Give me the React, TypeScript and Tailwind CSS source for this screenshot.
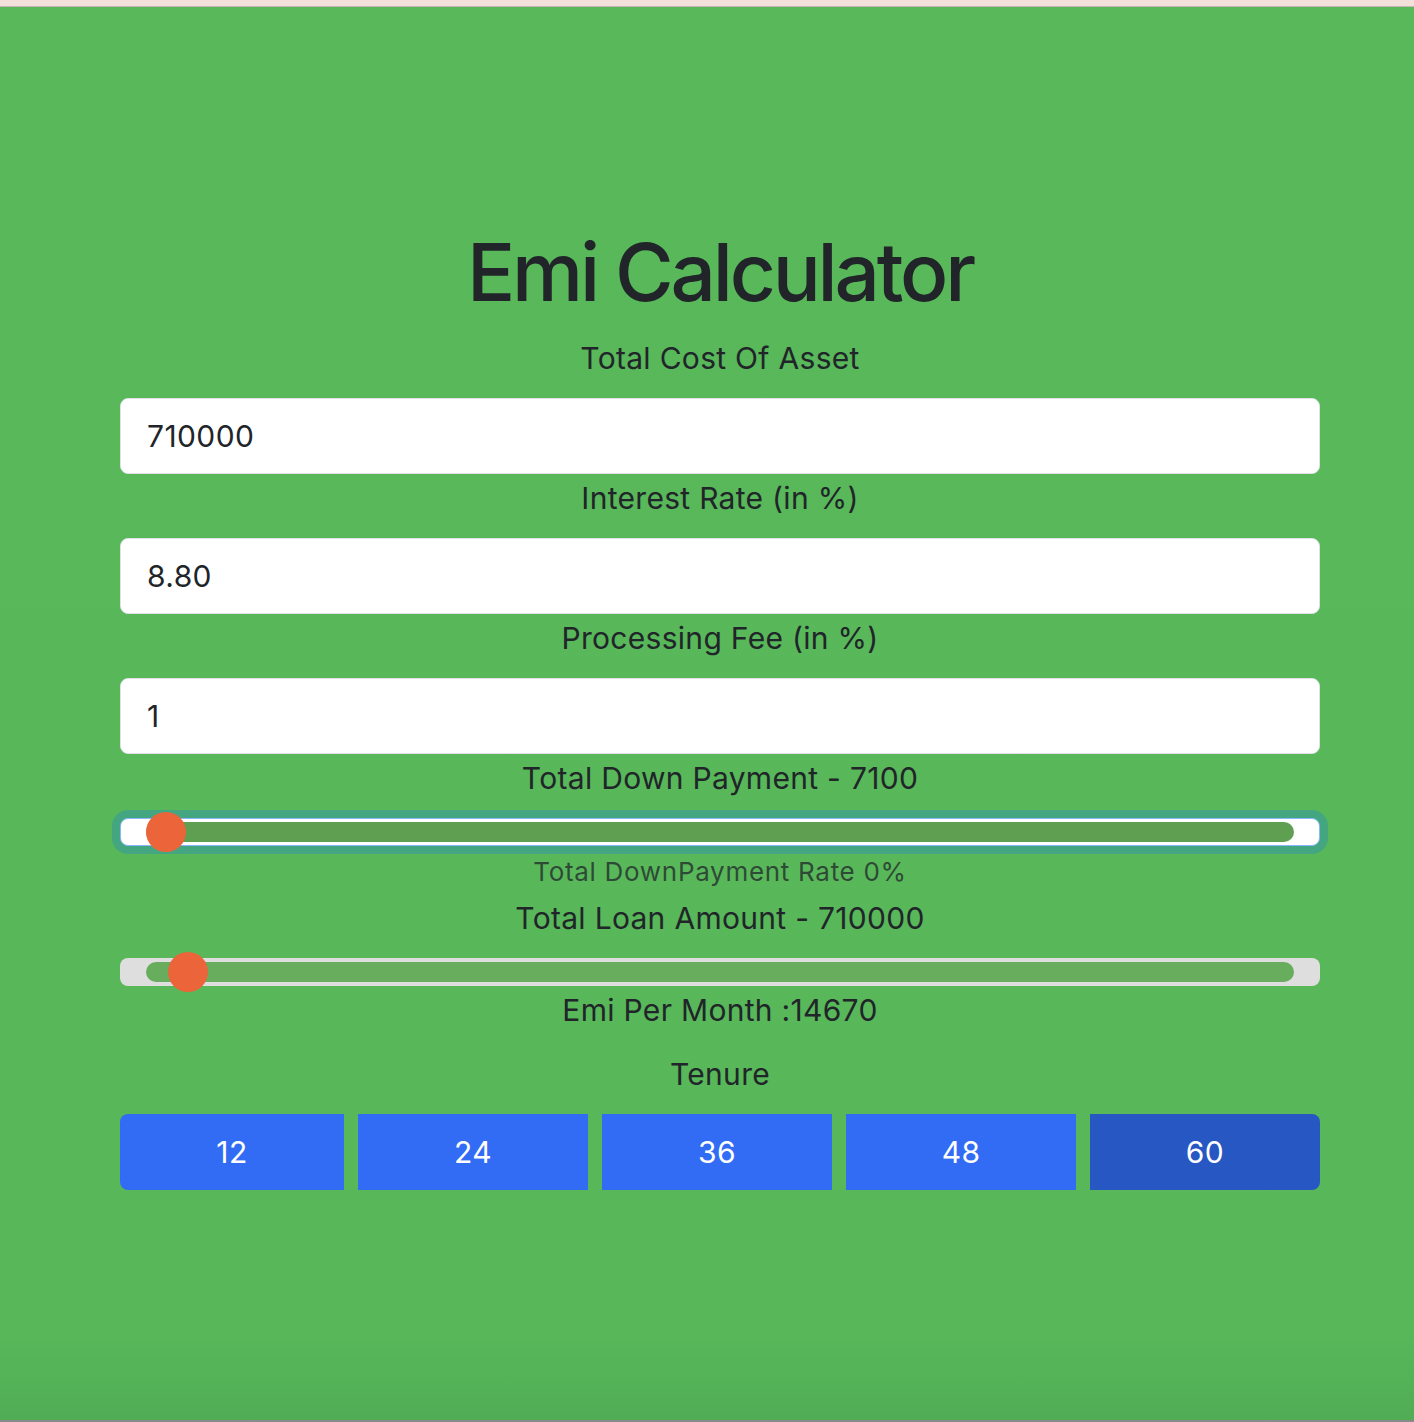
import React from "react";

const font = { fontFamily: "Inter, 'Noto Sans', 'Liberation Sans', sans-serif" };

function Label({ children, className = "" }: { children: React.ReactNode; className?: string }) {
  return (
    <div className={"h-[45px] leading-[45px] text-center text-[30px] tracking-[0.3px] text-[#212529] " + className}>
      {children}
    </div>
  );
}

function Input({ value }: { value: string }) {
  return (
    <div className="h-[76px] w-full rounded-lg border border-[#dee2e6] bg-white pl-[26px] flex items-center text-[30px] tracking-[0.4px] text-[#212529]">
      {value}
    </div>
  );
}

export default function App() {
  const tenures = ["12", "24", "36", "48", "60"];
  return (
    <div style={font} className="w-[1414px] h-[1422px] overflow-hidden flex flex-col">
      <div className="h-[6px] bg-[#f3e0da]" />
      <div className="h-[1px] bg-[#c4b6b2]" />
      <div className="flex-1 bg-gradient-to-b from-[#58b85a] via-[#57b759] via-[94%] to-[#51ad55] flex flex-col">
        <div className="w-[1200px] ml-[120px] flex flex-col pt-[217px]">
          <h1 className="h-[96px] leading-[96px] text-center text-[80px] font-medium text-[#212529] tracking-[-3.2px]">
            Emi Calculator
          </h1>
          <Label className="mt-[16px] mb-[17px]">Total Cost Of Asset</Label>
          <Input value="710000" />
          <Label className="mt-[2px] mb-[17px]">Interest Rate (in %)</Label>
          <Input value="8.80" />
          <Label className="mt-[2px] mb-[17px]">Processing Fee (in %)</Label>
          <Input value="1" />
          <Label className="mt-[2px] mb-[17px]">Total Down Payment - 7100</Label>

          {/* focused slider */}
          <div className="relative h-[28px] rounded-lg bg-white border border-[#86b7fe] shadow-[0_0_0_8px_rgba(13,110,253,0.25)] flex items-center px-[25px]">
            <div className="h-[20px] flex-1 rounded-[10px] bg-[#5e9f52]" />
            <div className="absolute left-[25px] top-1/2 -translate-y-1/2 w-[40px] h-[40px] rounded-full bg-[#ec6439]" />
          </div>

          <div className="mt-[6px] h-[39px] leading-[39px] text-center text-[26px] tracking-[0.7px] text-[#212529]/75">
            Total DownPayment Rate 0%
          </div>
          <Label className="mt-[5px] mb-[17px]">Total Loan Amount - 710000</Label>

          <div className="relative h-[28px] rounded-lg bg-[#dedede] flex items-center px-[26px]">
            <div className="h-[20px] flex-1 rounded-[10px] bg-[#68ad5e]" />
            <div className="absolute left-[48px] top-1/2 -translate-y-1/2 w-[40px] h-[40px] rounded-full bg-[#ec6439]" />
          </div>

          <Label className="mt-[2px]">Emi Per Month :14670</Label>
          <Label className="mt-[19px] mb-[17px]">Tenure</Label>

          <div className="flex gap-[14px] h-[76px]">
            {tenures.map((t, i) => (
              <button
                key={t}
                className={
                  "flex items-center justify-center text-[30px] tracking-[0.4px] text-white " +
                  (i === 4 ? "flex-1 bg-[#2657c3] rounded-r-lg " : "bg-[#326cf4] ") +
                  (i === 0 ? "w-[224px] rounded-l-lg" : "flex-1")
                }
              >
                {t}
              </button>
            ))}
          </div>
        </div>
      </div>
      <div className="h-[2px] bg-[#8a8a8a]" />
    </div>
  );
}
